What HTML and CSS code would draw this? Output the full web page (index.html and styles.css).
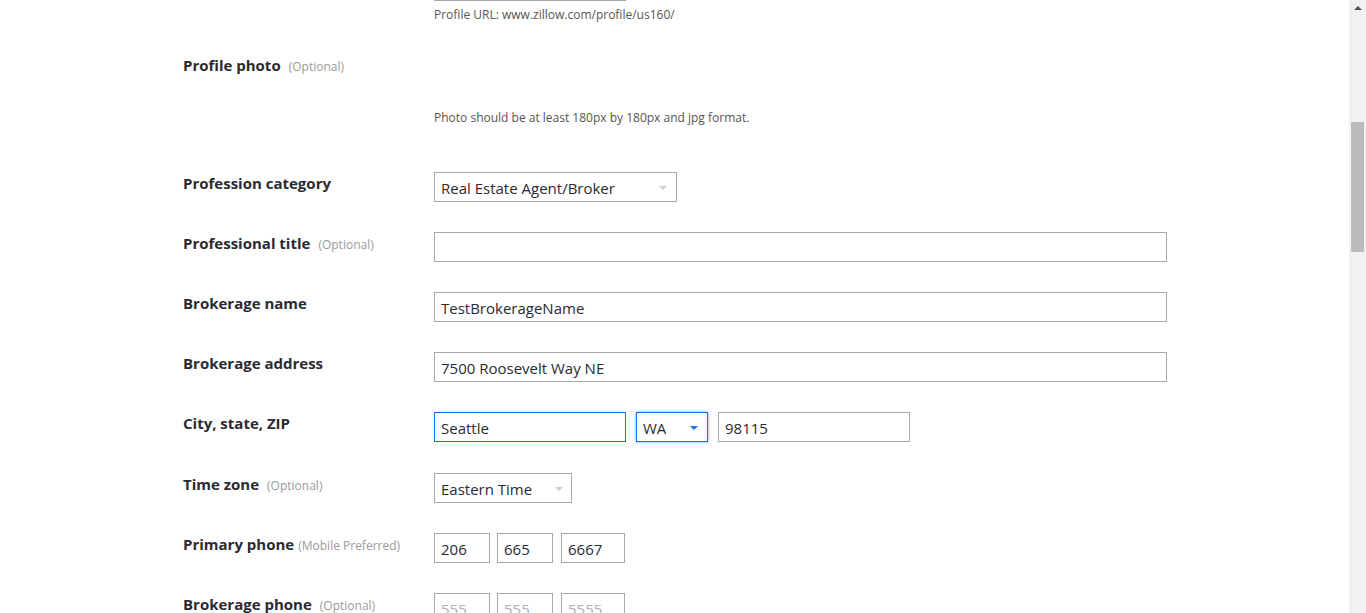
FILE: index.html
```html
<!DOCTYPE html>
<html>
<head>
<meta charset="utf-8">
<link rel="stylesheet" href="styles.css">
</head>
<body>
<div class="page">
  <div class="url-block">
    <div class="url-line"></div>
    <div class="hint">Profile URL: www.zillow.com/profile/us160/</div>
  </div>

  <div class="row photo-row">
    <div class="label">Profile photo<span class="opt">(Optional)</span></div>
    <div class="field photo-field">
      <div class="hint">Photo should be at least 180px by 180px and jpg format.</div>
    </div>
  </div>

  <div class="row">
    <div class="label">Profession category</div>
    <div class="field">
      <div class="select sel-prof"><span>Real Estate Agent/Broker</span><i class="caret light"></i></div>
    </div>
  </div>

  <div class="row">
    <div class="label">Professional title<span class="opt">(Optional)</span></div>
    <div class="field"><div class="input wide"></div></div>
  </div>

  <div class="row">
    <div class="label">Brokerage name</div>
    <div class="field"><div class="input wide">TestBrokerageName</div></div>
  </div>

  <div class="row">
    <div class="label">Brokerage address</div>
    <div class="field"><div class="input wide">7500 Roosevelt Way NE</div></div>
  </div>

  <div class="row row-city">
    <div class="label">City, state, ZIP</div>
    <div class="field group">
      <div class="input city focus">Seattle</div>
      <div class="select state focus glow"><span>WA</span><i class="caret blue"></i></div>
      <div class="input zip">98115</div>
    </div>
  </div>

  <div class="row">
    <div class="label">Time zone<span class="opt">(Optional)</span></div>
    <div class="field">
      <div class="select sel-tz"><span>Eastern Time</span><i class="caret light"></i></div>
    </div>
  </div>

  <div class="row">
    <div class="label">Primary phone<span class="opt tight">(Mobile Preferred)</span></div>
    <div class="field phones">
      <div class="input p3">206</div>
      <div class="input p3">665</div>
      <div class="input p4">6667</div>
    </div>
  </div>

  <div class="row">
    <div class="label">Brokerage phone<span class="opt">(Optional)</span></div>
    <div class="field phones">
      <div class="input p3 ph">555</div>
      <div class="input p3 ph">555</div>
      <div class="input p4 ph">5555</div>
    </div>
  </div>
</div>

<div class="scrollbar">
  <div class="sb-arrow"></div>
  <div class="sb-thumb"></div>
</div>
</body>
</html>
```

FILE: styles.css
```css
html, body {
  margin: 0;
  padding: 0;
  overflow: hidden;
  background: #fff;
}
body {
  font-family: "Open Sans", "Noto Sans", sans-serif;
  color: #2a2a33;
  width: 1366px;
  height: 613px;
}
.page {
  padding-left: 183px;
  width: 1166px;
}
.url-block {
  margin-left: 251px;
}
.url-line {
  width: 192px;
  height: 1px;
  background: #a8a8a8;
}
.hint {
  font-size: 12px;
  line-height: 16px;
  color: #555;
}
.url-block .hint {
  margin-top: 6px;
}
.row {
  display: grid;
  grid-template-columns: 251px 1fr;
  margin-bottom: 30px;
}
.photo-row {
  margin-top: 31px;
  margin-bottom: 46px;
}
.photo-field {
  padding-top: 56px;
}
.row-city {
  margin-bottom: 31px;
}
.label {
  font-size: 15px;
  font-weight: 700;
  line-height: 22px;
  color: #2a2a33;
  white-space: nowrap;
}
.opt {
  font-size: 12px;
  font-weight: 400;
  color: #9a9a9a;
  margin-left: 8px;
}
.opt.tight {
  margin-left: 4px;
}
.field {
  display: flex;
}
.input, .select {
  box-sizing: border-box;
  height: 30px;
  border: 1px solid #a9a9a9;
  font-size: 15px;
  line-height: 28px;
  padding: 1px 6px 0;
  color: #2a2a33;
  background: #fff;
  white-space: nowrap;
}
.wide {
  width: 733px;
}
.select {
  display: flex;
  align-items: center;
  justify-content: space-between;
}
.sel-prof {
  width: 243px;
  padding-right: 9px;
}
.sel-tz {
  width: 138px;
  padding-right: 8px;
}
.caret {
  width: 0;
  height: 0;
  border-left: 4px solid transparent;
  border-right: 4px solid transparent;
  border-top: 4px solid #cfcfcf;
}
.caret.blue {
  border-top-color: #1a73e8;
}
.group {
  gap: 10px;
}
.city {
  width: 192px;
}
.state {
  width: 72px;
  padding-right: 9px;
}
.zip {
  width: 192px;
}
.focus {
  border-color: #1a6fe8;
}
.glow {
  box-shadow: 0 0 3px rgba(40, 130, 240, 0.7);
}
.phones {
  gap: 7px;
}
.p3 {
  width: 56px;
}
.p4 {
  width: 64px;
  margin-left: 1px;
}
.ph {
  color: #b0b0b0;
}
.scrollbar {
  position: fixed;
  top: 0;
  right: 0;
  width: 17px;
  height: 613px;
  background: #f1f1f1;
}
.sb-arrow {
  position: absolute;
  top: 6px;
  left: 5px;
  width: 0;
  height: 0;
  border-left: 4px solid transparent;
  border-right: 4px solid transparent;
  border-bottom: 4px solid #505050;
}
.sb-thumb {
  position: absolute;
  top: 122px;
  left: 2px;
  width: 13px;
  height: 130px;
  background: #bcbcbc;
}
```
